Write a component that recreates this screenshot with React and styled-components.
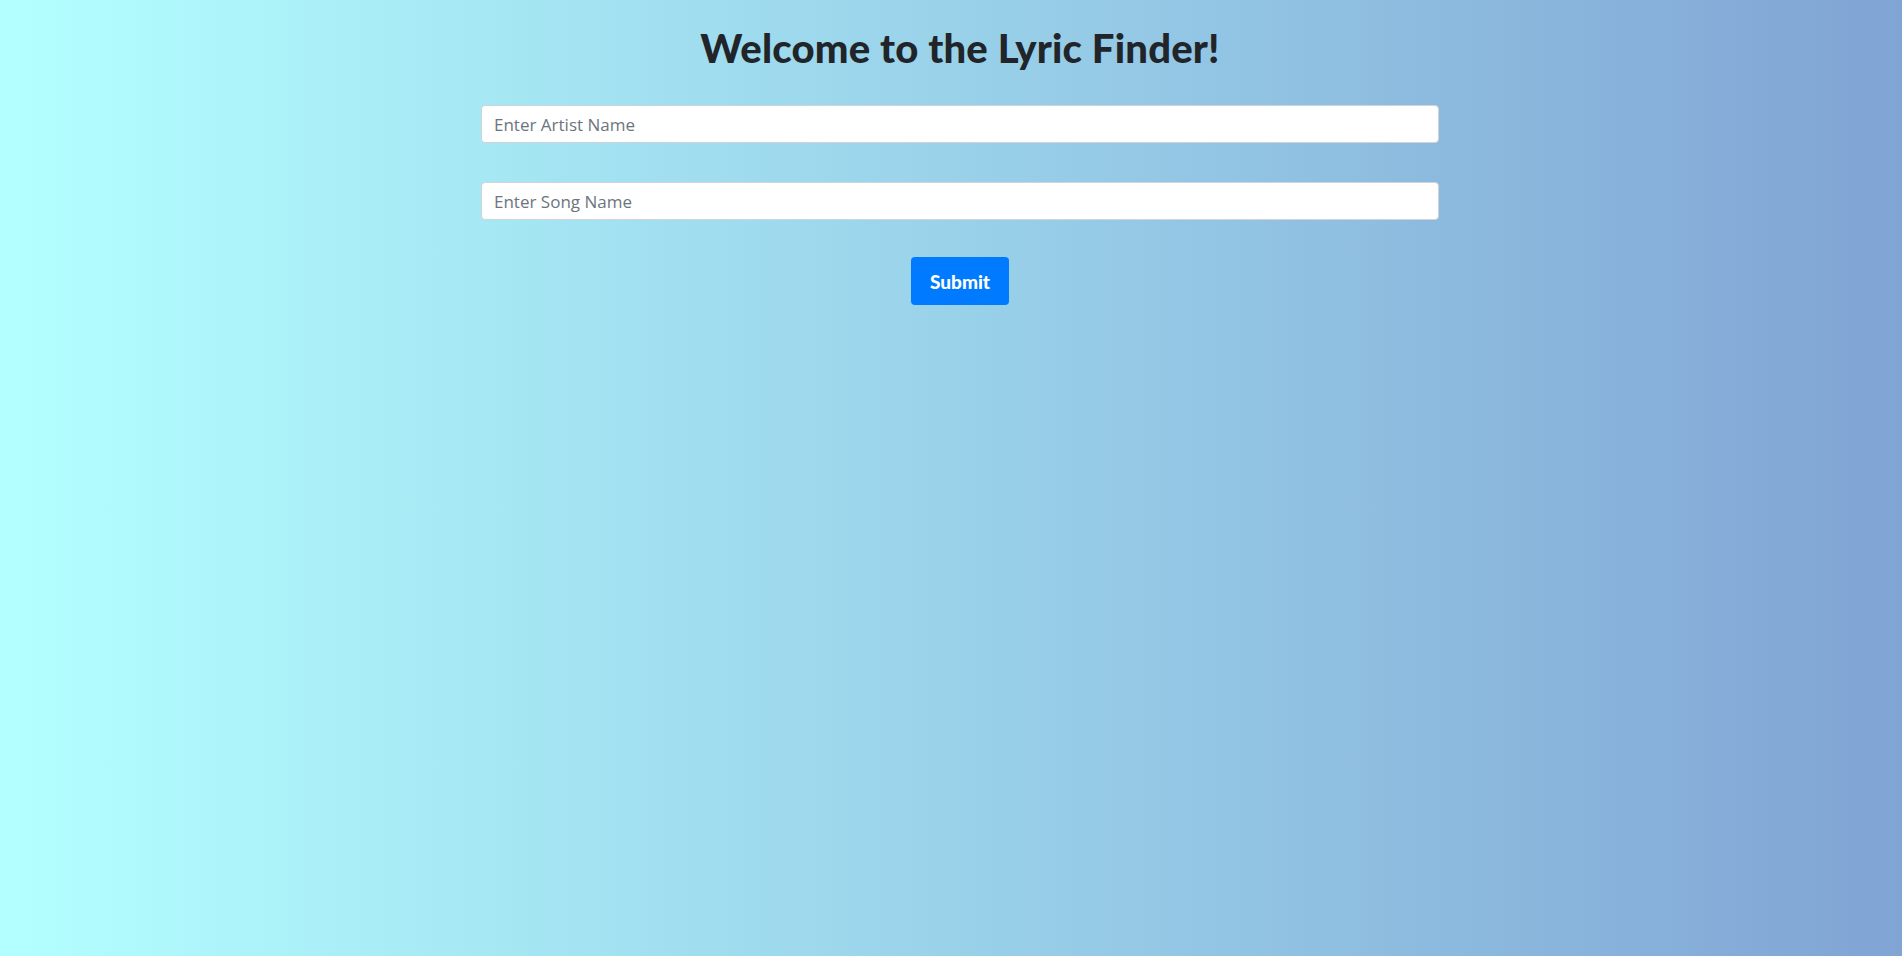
import React, { useState } from "react";
import styled, { createGlobalStyle } from "styled-components";

const GlobalStyle = createGlobalStyle`
  html, body {
    margin: 0;
    padding: 0;
    height: 100%;
  }
  body {
    font-family: "Open Sans", "Noto Sans", sans-serif;
    color: #212529;
  }
`;

export default function App() {
  const [artist, setArtist] = useState("");
  const [song, setSong] = useState("");

  return (
    <Page>
      <GlobalStyle />
      <Title>Welcome to the Lyric Finder!</Title>
      <Form onSubmit={(e) => e.preventDefault()}>
        <Field
          type="text"
          placeholder="Enter Artist Name"
          value={artist}
          onChange={(e) => setArtist(e.target.value)}
        />
        <Field
          type="text"
          placeholder="Enter Song Name"
          value={song}
          onChange={(e) => setSong(e.target.value)}
        />
        <SubmitButton type="submit">Submit</SubmitButton>
      </Form>
    </Page>
  );
}

const Page = styled.div`
  min-height: 956px;
  box-sizing: border-box;
  background: linear-gradient(to right, #b3ffff, #80a4d4);
  padding: 24px 0 0 18px;
`;

const Title = styled.h1`
  margin: 0 0 33px;
  text-align: center;
  font-family: "Lato", sans-serif;
  font-weight: 900;
  font-size: 40px;
  letter-spacing: 0.2px;
  line-height: 1.2;
  color: #212529;
`;

const Form = styled.form`
  width: 958px;
  margin: 0 auto;
  display: flex;
  flex-direction: column;
  gap: 39px;
`;

const Field = styled.input`
  box-sizing: border-box;
  width: 100%;
  height: 38px;
  padding: 6px 12px;
  font-family: "Open Sans", "Noto Sans", sans-serif;
  font-size: 17px;
  color: #495057;
  background: #fff;
  border: 1px solid #ced4da;
  border-radius: 4px;
  outline: none;

  &::placeholder {
    color: #6c757d;
  }
`;

const SubmitButton = styled.button`
  align-self: center;
  margin-top: -2px;
  width: 98px;
  height: 48px;
  border: none;
  border-radius: 4px;
  background: #007bff;
  color: #fff;
  font-family: "Lato", sans-serif;
  font-weight: 900;
  font-size: 19px;
  cursor: pointer;
`;
